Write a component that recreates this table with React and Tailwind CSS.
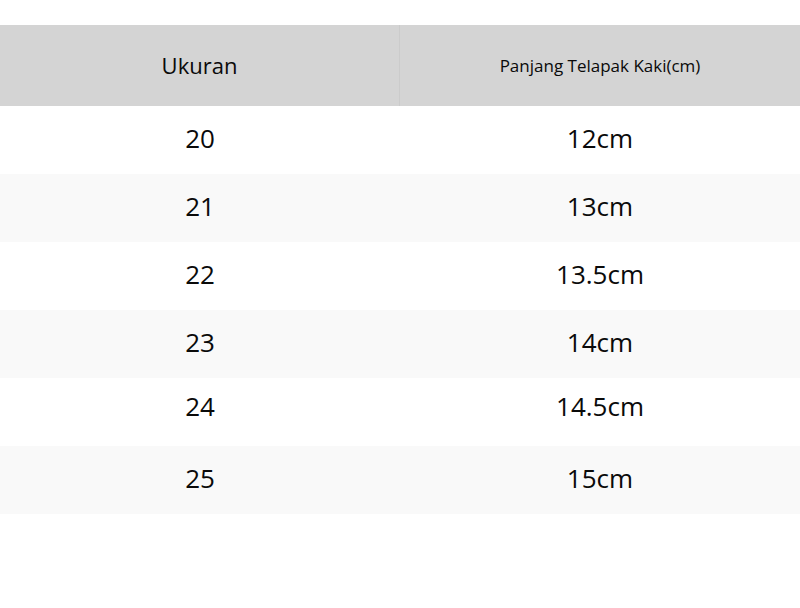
const rows = [
  ["20", "12cm"],
  ["21", "13cm"],
  ["22", "13.5cm"],
  ["23", "14cm"],
  ["24", "14.5cm"],
  ["25", "15cm"],
];

export default function App() {
  return (
    <div
      className="min-h-screen bg-white pt-[25px] text-[#0a0a0a]"
      style={{ fontFamily: '"Open Sans", "Noto Sans", sans-serif' }}
    >
      <div className="grid grid-cols-2 h-[81px] bg-[#d4d4d4]">
        <div className="flex items-center justify-center border-r border-[#cbcbcb] text-[22px]">
          Ukuran
        </div>
        <div className="flex items-center justify-center text-[17px]">
          Panjang Telapak Kaki(cm)
        </div>
      </div>
      {rows.map(([size, len], i) => (
        <div
          key={size}
          className={
            "grid grid-cols-2 h-[68px] text-[26px] " +
            (i === 4 ? "pb-[12px] " : "pb-1 ") +
            (i % 2 === 1 ? "bg-[#f9f9f9]" : "bg-white")
          }
        >
          <div className="flex items-center justify-center">{size}</div>
          <div className="flex items-center justify-center">{len}</div>
        </div>
      ))}
    </div>
  );
}
